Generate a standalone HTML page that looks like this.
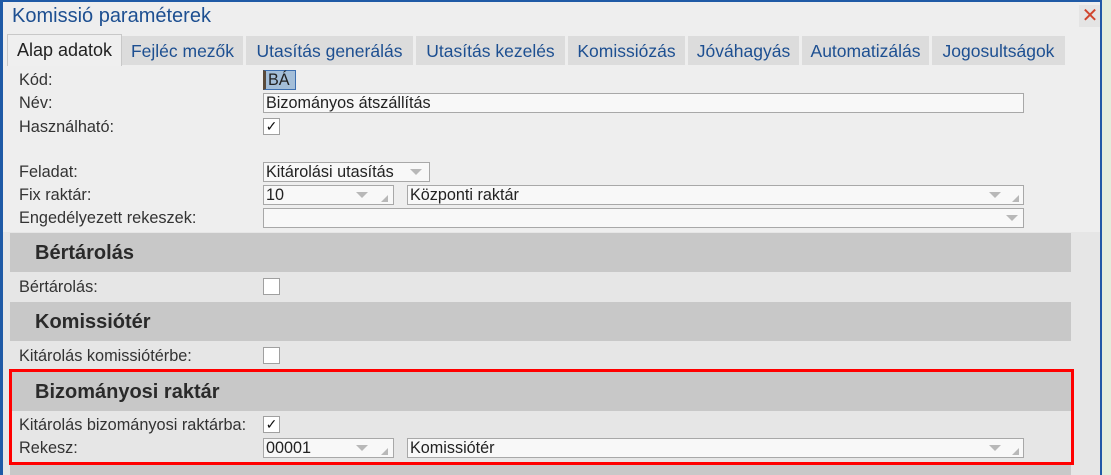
<!DOCTYPE html>
<html><head><style>
html,body{margin:0;width:1111px;height:475px;overflow:hidden}
body{background:#e2eedc;font-family:"Liberation Sans",sans-serif;position:relative}
.win{position:absolute;left:0;top:0;width:1102px;height:475px;background:#e6e6e6;border-left:3px solid #1f5aa6;border-right:2px solid #1f5aa6;border-top:2px solid #1f5aa6;box-sizing:border-box;overflow:hidden}
.top{position:absolute;left:0;top:0;width:1097px;height:230px;background:#eeeeee}
.a{position:absolute}
.title{left:9px;top:3px;font-size:20px;color:#1d4f91}
.close{left:1076px;top:3px;width:22px;height:22px;background:#e4e4e4;color:#d0452e;font-size:20px;text-align:center;line-height:22px}
.tab{position:absolute;top:34px;height:29px;background:#dcdcdc;color:#1d4f91;font-size:17.5px;line-height:30px;text-align:center;white-space:nowrap}
.tab.act{background:#efefef;color:#222;border:1px solid #c8c8c8;border-bottom:none;top:32px;height:31px;font-size:18px}
.lbl{position:absolute;left:16px;font-size:16.3px;color:#333;white-space:nowrap}
.inp{position:absolute;height:20px;background:#f8f8f8;border:1px solid #a8a8a8;box-sizing:border-box;font-size:16.2px;color:#222;line-height:18px;padding-left:2px;white-space:nowrap}
.cb{position:absolute;width:17px;height:17px;background:#fff;border:1px solid #a0a0a0;box-sizing:border-box;font-size:14px;line-height:15px;text-align:center;color:#111}
.hdr{position:absolute;left:7px;width:1061px;height:39px;background:#c8c8c8;font-weight:bold;font-size:20px;color:#2a2a2a;line-height:40px;padding-left:25px;box-sizing:border-box}
.dd{position:absolute;top:6px;width:0;height:0;border-left:6px solid transparent;border-right:6px solid transparent;border-top:6px solid #b8b8b8}
.rs{position:absolute;bottom:2px;width:0;height:0;border-left:7px solid transparent;border-bottom:7px solid #b8b8b8}
</style></head><body>
<div class="win">
<div class="top"></div>
<div class="a title">Komissió paraméterek</div>
<div class="a close">✕</div>
<div class="tab act" style="left:4px;width:113px">Alap adatok</div>
<div class="tab" style="left:119px;width:121px">Fejléc mezők</div>
<div class="tab" style="left:243px;width:167px">Utasítás generálás</div>
<div class="tab" style="left:413px;width:149px">Utasítás kezelés</div>
<div class="tab" style="left:565px;width:117px">Komissiózás</div>
<div class="tab" style="left:685px;width:111px">Jóváhagyás</div>
<div class="tab" style="left:799px;width:127px">Automatizálás</div>
<div class="tab" style="left:929px;width:133px">Jogosultságok</div>

<div class="lbl" style="top:69px">Kód:</div>
<div class="inp" style="left:260px;top:68px;width:33px;background:#a4bed8;border-color:#3d6fb0;border-left:3px solid #5a4a3a">BÁ</div>
<div class="lbl" style="top:92px">Név:</div>
<div class="inp" style="left:260px;top:91px;width:761px">Bizományos átszállítás</div>
<div class="lbl" style="top:116px">Használható:</div>
<div class="cb" style="left:260px;top:116px">✓</div>

<div class="lbl" style="top:161px">Feladat:</div>
<div class="inp" style="left:260px;top:160px;width:167px">Kitárolási utasítás<div class="dd" style="left:146px"></div></div>
<div class="lbl" style="top:184px">Fix raktár:</div>
<div class="inp" style="left:260px;top:183px;width:131px">10<div class="dd" style="left:92px"></div><div class="rs" style="left:117px"></div></div>
<div class="inp" style="left:404px;top:183px;width:617px">Központi raktár<div class="dd" style="left:581px"></div><div class="rs" style="left:604px"></div></div>
<div class="lbl" style="top:207px">Engedélyezett rekeszek:</div>
<div class="inp" style="left:260px;top:206px;width:761px"><div class="dd" style="left:742px"></div></div>

<div class="hdr" style="top:231px">Bértárolás</div>
<div class="lbl" style="top:276px">Bértárolás:</div>
<div class="cb" style="left:260px;top:276px"></div>
<div class="hdr" style="top:300px">Komissiótér</div>
<div class="lbl" style="top:345px">Kitárolás komissiótérbe:</div>
<div class="cb" style="left:260px;top:345px"></div>
<div class="hdr" style="top:370px">Bizományosi raktár</div>
<div class="lbl" style="top:414px">Kitárolás bizományosi raktárba:</div>
<div class="cb" style="left:260px;top:414px">✓</div>
<div class="lbl" style="top:437px">Rekesz:</div>
<div class="inp" style="left:260px;top:436px;width:131px">00001<div class="dd" style="left:92px"></div><div class="rs" style="left:117px"></div></div>
<div class="inp" style="left:404px;top:436px;width:617px">Komissiótér<div class="dd" style="left:581px"></div><div class="rs" style="left:604px"></div></div>
<div class="hdr" style="top:462px;height:11px"></div>
<div class="a" style="left:6px;top:367px;width:1065px;height:96px;border:3px solid #f00;box-sizing:border-box"></div>
</div>
</body></html>
